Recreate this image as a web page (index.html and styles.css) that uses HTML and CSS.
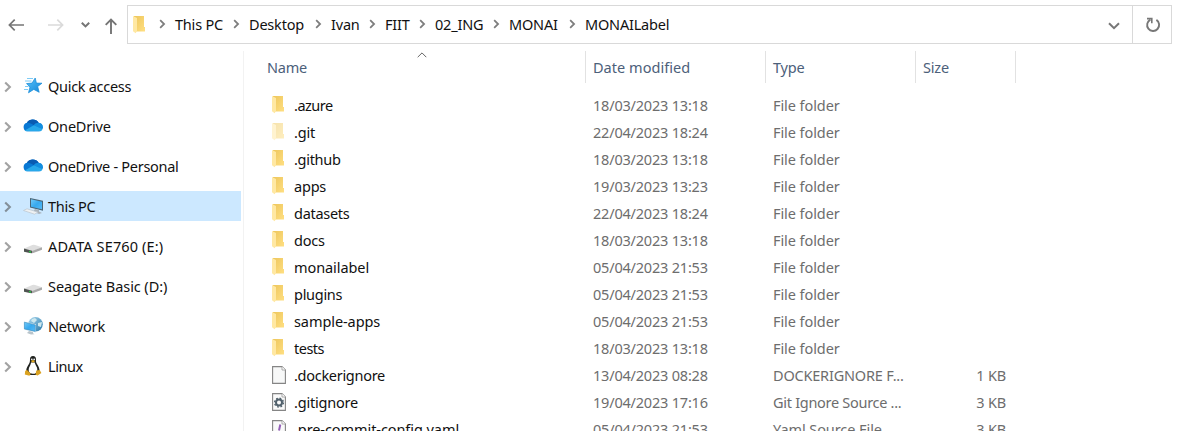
FILE: index.html
```html
<!DOCTYPE html>
<html lang="en">
<head>
<meta charset="utf-8">
<title>MONAILabel</title>
<link rel="stylesheet" href="styles.css">
</head>
<body>
<svg class="defs" width="0" height="0" aria-hidden="true">
  <defs>
    <linearGradient id="back" x1="0" y1="0" x2="1" y2="1"><stop offset="0" stop-color="#edc65c"/><stop offset="1" stop-color="#ffdf82"/></linearGradient>
    <linearGradient id="screen" x1="0" y1="0" x2="1" y2="1"><stop offset="0" stop-color="#72c9f8"/><stop offset=".5" stop-color="#37a9ee"/><stop offset="1" stop-color="#59baf5"/></linearGradient>
    <linearGradient id="star" x1="0" y1="0" x2="1" y2="1"><stop offset="0" stop-color="#57c2fb"/><stop offset="1" stop-color="#1285d6"/></linearGradient>
    <linearGradient id="globe" x1="0" y1="0" x2="1" y2="1"><stop offset="0" stop-color="#a9d8ef"/><stop offset="1" stop-color="#2878aa"/></linearGradient>
    <symbol id="chev" viewBox="0 0 8 12"><path d="M1.2 1.4 5.9 6 1.2 10.6" fill="none" stroke="currentColor" stroke-width="2.1"/></symbol>
    <symbol id="folder" viewBox="0 0 14 18"><path d="M1 0H11V11H12V15.5H1Z" fill="url(#back)"/><path d="M0 0 4 2V15L2.6 17.2 0 15.2Z" fill="#ffe8a3"/></symbol>
    <symbol id="cloud" viewBox="0 0 20 13"><path d="M4.6 13A4.5 4.5 0 0 1 3.9 4.2 6.8 6.8 0 0 1 15.6 4.3 4.4 4.4 0 0 1 15.9 13Z" fill="#0878d4"/><path d="M3.9 4.2A6.8 6.8 0 0 1 15.6 4.3L10.8 6.8C8.6 5 6.3 4 3.9 4.2Z" fill="#0a5bb2"/><path d="M10.8 6.8C12 5 13.6 4.3 15.6 4.3 18.2 4.4 20 6.3 20 8.7L19.5 10.4Z" fill="#148edf"/><path d="M1.7 12 10.8 6.8 19.6 10.4C19 12 17.6 13 15.9 13H4.6C3.4 13 2.5 12.6 1.7 12Z" fill="#28a8ea"/></symbol>
    <symbol id="drive" viewBox="0 0 18 9"><path d="M0 4 9.5 0 18 2.8 8 7Z" fill="#dedede"/><path d="M8 6.5 18 2.8V5.3L8 9Z" fill="#aaa"/><path d="M0 4 8 6.2V9L0 7.2Z" fill="#505451"/><path d="M5 6.6 7 7.1V8.2L5 7.7Z" fill="#27cf45"/></symbol>
  </defs>
</svg>

<header class="toolbar">
  <svg class="arrows" viewBox="0 0 127 51" fill="none" stroke="#757575" stroke-width="1.7">
    <path d="M24 25H9.5M14.7 19.7 9.4 25 14.7 30.3"/>
    <path d="M48 25H62.5M57.3 19.7 62.6 25 57.3 30.3" stroke="#dadada"/>
    <path d="M81.8 22.7 85.5 26.4 89.2 22.7" stroke-width="2"/>
    <path d="M111 34V19.6M105.7 24.9 111 19.6 116.3 24.9" stroke-width="1.9"/>
  </svg>
  <div class="address">
    <svg class="folder"><use href="#folder"/></svg>
    <svg class="chev lead"><use href="#chev"/></svg>
    <nav class="crumbs">
      <span class="crumb">This PC<svg class="chev"><use href="#chev"/></svg></span>
      <span class="crumb">Desktop<svg class="chev"><use href="#chev"/></svg></span>
      <span class="crumb">Ivan<svg class="chev"><use href="#chev"/></svg></span>
      <span class="crumb">FIIT<svg class="chev"><use href="#chev"/></svg></span>
      <span class="crumb">02_ING<svg class="chev"><use href="#chev"/></svg></span>
      <span class="crumb">MONAI<svg class="chev"><use href="#chev"/></svg></span>
      <span class="crumb">MONAILabel</span>
    </nav>
    <svg class="drop" viewBox="0 0 12 8"><path d="M1 1.2 6 6.2 11 1.2" fill="none" stroke="#777" stroke-width="2"/></svg>
    <div class="refresh"><svg width="16" height="16" viewBox="0 0 16 16" fill="none" stroke="#777" stroke-width="1.9"><path d="M11.4 2.9A6 6 0 1 1 5.4 2.6"/><path d="M2 1.6H6.8V6.3" stroke-width="1.6"/></svg></div>
  </div>
</header>

<div class="body">
  <aside class="tree">
    <div class="node"><svg class="chev"><use href="#chev"/></svg><svg class="icon" viewBox="0 0 22 20"><path d="M13.2 2 14.4 7.1 20 7.2 15.7 10.5 17.2 16.3 11.8 13.4 6.5 16.8 8 11 4.5 7.6 10 7.1Z" fill="url(#star)" stroke="#168bd8" stroke-width=".7"/><path d="M5 2.5H11M3 5H9.5M3 10.5H6.5M2 13.5H6" stroke="#7ecbf5" stroke-width="1"/></svg><span class="snug">Quick access</span></div>
    <div class="node"><svg class="chev"><use href="#chev"/></svg><svg class="icon" viewBox="0 0 22 20"><use href="#cloud" x="1" y="2.5" width="20" height="13"/></svg><span>OneDrive</span></div>
    <div class="node"><svg class="chev"><use href="#chev"/></svg><svg class="icon" viewBox="0 0 22 20"><use href="#cloud" x="1" y="2.5" width="20" height="13"/></svg><span class="snug">OneDrive - Personal</span></div>
    <div class="node selected"><svg class="chev"><use href="#chev"/></svg><svg class="icon" viewBox="0 0 22 20"><path d="M8 2 21 4.8V14.8L8 11.5Z" fill="#4b6576"/><path d="M9 3.2 20 5.7V13.3L9 10.8Z" fill="url(#screen)"/><path d="M13 13 17 14V15.5L20 17 17 18 11 15.5Z" fill="#aab3bb"/><path d="M1.5 14.5 5 12.8 16 16.2 12.5 18.2Z" fill="#eef1f3" stroke="#bbc5ce" stroke-width=".7"/></svg><span class="snug">This PC</span></div>
    <div class="node"><svg class="chev"><use href="#chev"/></svg><svg class="icon" viewBox="0 0 22 20"><use href="#drive" x="2" y="8.5" width="18" height="9"/></svg><span class="loose">ADATA SE760 (E:)</span></div>
    <div class="node"><svg class="chev"><use href="#chev"/></svg><svg class="icon" viewBox="0 0 22 20"><use href="#drive" x="2" y="8.5" width="18" height="9"/></svg><span class="open">Seagate Basic (D:)</span></div>
    <div class="node"><svg class="chev"><use href="#chev"/></svg><svg class="icon" viewBox="0 0 22 20"><circle cx="13.5" cy="8.3" r="7.3" fill="url(#globe)"/><path d="M10 3 13 2 15 4 12 7 9 5ZM16 7 20 6 19 11 16 10Z" fill="#cee8ee"/><path d="M2 5.5 14 8.3V16.5L2 13.8Z" fill="#e4eef3"/><path d="M2.4 6.2 13.3 8.9V15.4L2.4 12.9Z" fill="url(#screen)" stroke="#328abd" stroke-width=".6"/><path d="M7 15 11 16V17.2L12.5 18.3 9 18.5 5 17Z" fill="#b8c4cb"/></svg><span>Network</span></div>
    <div class="node"><svg class="chev"><use href="#chev"/></svg><svg class="icon" viewBox="0 0 22 20"><path d="M11 0C8.8 0 8 1.5 8 3.4 8 6.2 7.5 7.3 6 9.5 4.6 11.6 4 14 4.2 16.5L7 19H14.5L17.5 16.5C18 13.3 16.5 10 15 8 13.8 6.2 14 5 14 3.4 14 1.4 13.2 0 11 0Z" fill="#20221f"/><path d="M9.1 6.4H12.8C13 9 15.8 11 15.3 14.2 14.8 17.2 13 18 10.5 17.8 7.4 17.5 6.3 15.5 6.7 13 7 10.8 8.8 9 9.1 6.4Z" fill="#fff"/><circle cx="9.8" cy="3.3" r=".9" fill="#eee"/><circle cx="12.2" cy="3.3" r=".9" fill="#eee"/><path d="M8.8 5 11 4 13.2 5 11 6.7Z" fill="#e5ad24"/><path d="M4.8 13.8 8.9 17.7 7.4 19.7 2.8 18.4 3.2 15ZM14.3 14.4 17.7 14 19.4 17 15.6 19.6 13.5 18.8Z" fill="#dba21f"/></svg><span class="snug tail">Linux</span></div>
  </aside>

  <main class="files">
    <div class="head">
      <div class="h-name">Name<svg class="sort" viewBox="0 0 10 6"><path d="M.7 5.2 5 .9 9.3 5.2" fill="none" stroke="#666" stroke-width="1"/></svg></div>
      <div class="wide">Date modified</div><div>Type</div><div>Size</div>
    </div>
    <div class="rows">
      <div class="row"><svg class="folder"><use href="#folder"/></svg><b class="tight">.azure</b><i>18/03/2023 13:18</i><em class="open">File folder</em></div>
      <div class="row"><svg class="folder hidden"><use href="#folder"/></svg><b>.git</b><i>22/04/2023 18:24</i><em class="open">File folder</em></div>
      <div class="row"><svg class="folder"><use href="#folder"/></svg><b class="snug">.github</b><i>18/03/2023 13:18</i><em class="open">File folder</em></div>
      <div class="row"><svg class="folder"><use href="#folder"/></svg><b>apps</b><i>19/03/2023 13:23</i><em class="open">File folder</em></div>
      <div class="row"><svg class="folder"><use href="#folder"/></svg><b class="snug">datasets</b><i>22/04/2023 18:24</i><em class="open">File folder</em></div>
      <div class="row"><svg class="folder"><use href="#folder"/></svg><b>docs</b><i>18/03/2023 13:18</i><em class="open">File folder</em></div>
      <div class="row"><svg class="folder"><use href="#folder"/></svg><b class="open">monailabel</b><i>05/04/2023 21:53</i><em class="open">File folder</em></div>
      <div class="row"><svg class="folder"><use href="#folder"/></svg><b class="snug">plugins</b><i>05/04/2023 21:53</i><em class="open">File folder</em></div>
      <div class="row"><svg class="folder"><use href="#folder"/></svg><b class="open">sample-apps</b><i>05/04/2023 21:53</i><em class="open">File folder</em></div>
      <div class="row"><svg class="folder"><use href="#folder"/></svg><b class="tight">tests</b><i>18/03/2023 13:18</i><em class="open">File folder</em></div>
      <div class="row"><svg class="page" viewBox="0 0 14 18"><path d="M.6.6H10L13.4 4V17.4H.6Z" fill="#f7f8f8" stroke="#858585" stroke-width="1.1"/><path d="M10 .6V4H13.4" fill="#fff" stroke="#999" stroke-width=".8"/></svg><b class="snug">.dockerignore</b><i>13/04/2023 08:28</i><em>DOCKERIGNORE F...</em><u>1 KB</u></div>
      <div class="row"><svg class="page" viewBox="0 0 14 18"><path d="M.6.6H10L13.4 4V17.4H.6Z" fill="#fafafa" stroke="#858585" stroke-width="1.1"/><path d="M10 .6V4H13.4" fill="#fff" stroke="#999" stroke-width=".8"/><circle cx="7" cy="9.6" r="3" fill="none" stroke="#51616c" stroke-width="2"/><circle cx="7" cy="9.6" r="4.4" fill="none" stroke="#51616c" stroke-width="1.4" stroke-dasharray="1.73 1.73"/></svg><b>.gitignore</b><i>19/04/2023 17:16</i><em class="snug">Git Ignore Source ...</em><u>3 KB</u></div>
      <div class="row"><svg class="page" viewBox="0 0 14 18"><path d="M.6.6H10L13.4 4V17.4H.6Z" fill="#fafafa" stroke="#858585" stroke-width="1.1"/><path d="M10 .6V4H13.4" fill="#fff" stroke="#999" stroke-width=".8"/><path d="M8.3 4.5 7 10.5M6.7 12 6.4 13.8" stroke="#9460b8" stroke-width="2"/></svg><b class="open">.pre-commit-config.yaml</b><i>05/04/2023 21:53</i><em class="open">Yaml Source File</em><u>3 KB</u></div>
    </div>
  </main>
</div>
</body>
</html>
```
FILE: styles.css
```css
* { box-sizing: border-box; }
body {
  margin: 0;
  width: 1181px;
  height: 431px;
  overflow: hidden;
  background: #fff;
  color: #111;
  font: 14.5px/20px "Noto Sans", "Open Sans", sans-serif;
  letter-spacing: -0.2px;
  white-space: nowrap;
}
svg { display: block; flex: none; }
.defs { position: absolute; }
.chev { width: 8px; height: 12px; color: #7d7d7d; }
.folder { width: 14px; height: 18px; }

/* optical tracking */
.tight { letter-spacing: -0.5px; }
.snug { letter-spacing: -0.29px; }
.tail { letter-spacing: -0.45px; }
.open { letter-spacing: -0.08px; }
.wide { letter-spacing: 0.03px; }
.loose { letter-spacing: 0.12px; }

.toolbar { display: flex; height: 51px; }
.arrows { width: 127px; height: 51px; }
.address {
  display: flex;
  align-items: center;
  width: 1045px;
  height: 39px;
  margin-top: 5px;
  padding-left: 5px;
  border: 1px solid #d9d9d9;
}
.lead { width: 7px; height: 10px; margin: 0 9px 2px 12px; }
.crumbs {
  display: grid;
  grid-template-columns: 74px 82px 54px 50px 74px 76px 1fr;
  flex: 1;
  padding-bottom: 2px;
}
.crumb { display: flex; align-items: center; justify-content: space-between; padding-right: 9px; }
.crumb .chev { width: 7px; height: 10px; }
.drop { width: 12px; height: 8px; margin-right: 12px; margin-top: 2px; }
.refresh {
  display: flex;
  align-items: center;
  justify-content: center;
  width: 39px;
  height: 37px;
  padding-left: 2px;
  border-left: 1px solid #d9d9d9;
}

.body { display: flex; height: 380px; }
.tree {
  display: flex;
  flex-direction: column;
  gap: 10px;
  width: 244px;
  padding-top: 20px;
  border-right: 1px solid #f2f2f2;
}
.node { display: flex; align-items: center; width: 241px; height: 30px; padding-left: 4px; }
.node .chev { color: #a2a2a2; margin-top: 2px; }
.node .icon { width: 22px; height: 20px; margin: 0 4px 0 10px; }
.selected { background: #cce8ff; }
.selected .chev { color: #838f99; }

.files { width: 772px; padding-left: 23px; }
.head { display: grid; grid-template-columns: 319px 180px 150px 100px; height: 32px; color: #4c607a; }
.head > div {
  display: flex;
  align-items: center;
  padding: 0 0 1px 7px;
  border-right: 1px solid #e2e2e2;
}
.head .h-name { position: relative; padding-left: 0; }
.sort { position: absolute; left: 150px; top: 1px; width: 10px; height: 6px; }
.rows { padding-top: 8px; }
.row {
  display: grid;
  grid-template-columns: 22px 299px 180px 150px 83px;
  align-items: center;
  height: 27px;
  padding-left: 5px;
  color: #6d6d6d;
}
.row .folder, .row .page { margin-top: 1px; }
.row b { font-weight: 400; color: #111; }
.row i, .row em { font-style: normal; }
.row u { text-decoration: none; text-align: right; }
.hidden { opacity: .5; }
.page { width: 14px; height: 18px; }
```
